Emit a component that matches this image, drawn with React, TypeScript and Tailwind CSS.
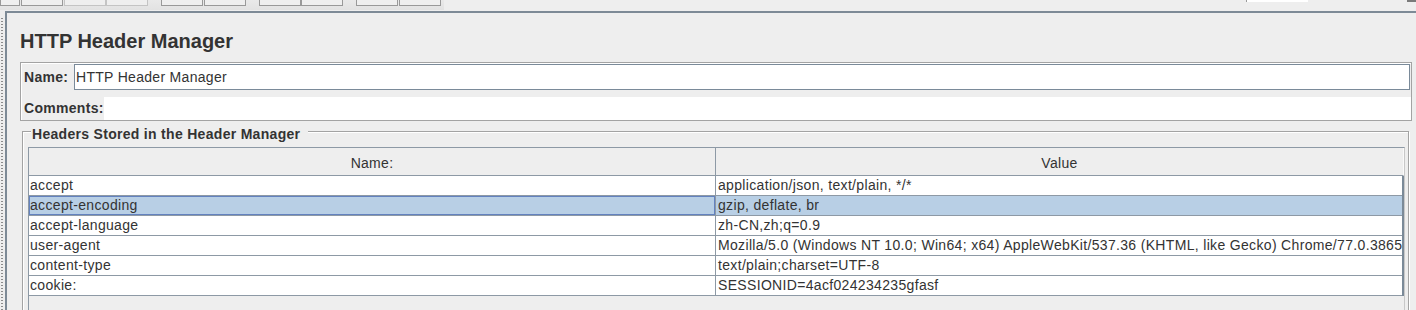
import React from "react";

const toolbarButtons = [
  { cls: "w-[20px]", dim: false },
  { cls: "ml-[1px] w-[42px]", dim: false },
  { cls: "ml-[1px] w-[42px]", dim: true },
  { cls: "w-[42px]", dim: true },
  { cls: "ml-[13px] w-[42px]", dim: false },
  { cls: "ml-[1px] w-[42px]", dim: false },
  { cls: "ml-[13px] w-[42px]", dim: false },
  { cls: "w-[42px]", dim: false },
  { cls: "ml-[13px] w-[42px]", dim: false },
  { cls: "ml-[1px] w-[42px]", dim: false },
];

const headers = [
  { name: "accept", value: "application/json, text/plain, */*" },
  { name: "accept-encoding", value: "gzip, deflate, br" },
  { name: "accept-language", value: "zh-CN,zh;q=0.9" },
  {
    name: "user-agent",
    value:
      "Mozilla/5.0 (Windows NT 10.0; Win64; x64) AppleWebKit/537.36 (KHTML, like Gecko) Chrome/77.0.3865",
  },
  { name: "content-type", value: "text/plain;charset=UTF-8" },
  { name: "cookie:", value: "SESSIONID=4acf024234235gfasf" },
];

const selectedRow = 1;

export default function App() {
  return (
    <div className="w-[1416px] h-[310px] overflow-hidden flex flex-col bg-[#eeeeee] text-[#333333] font-['Liberation_Sans',Arial,sans-serif]">
      {/* toolbar strip (cut off at the top) */}
      <div className="h-[11px] shrink-0 flex items-start">
        <div className="w-[444px] h-[10px] flex items-start bg-[linear-gradient(to_bottom,#e9e9e9,#e2e2e2)]">
          {toolbarButtons.map((b, i) => (
            <div
              key={i}
              className={`${b.cls} h-[6px] border-x border-b bg-[#efefef] ${
                b.dim ? "border-[#c4c4c4]" : "border-[#999999]"
              }`}
            />
          ))}
        </div>
        <div className="ml-[802px] w-[62px] h-[2px] bg-white border-l border-[#9a9a9a]" />
        <div className="ml-[99px] w-[9px] h-[2px] bg-[#7a7a7a]" />
      </div>

      <div className="flex flex-1 min-h-0">
        {/* split pane divider dots */}
        <div className="w-[5px] shrink-0 pt-[7px]">
          <div className="ml-[1px] w-[2px] h-full bg-[repeating-linear-gradient(to_bottom,#8c8c8c_0px,#8c8c8c_1px,transparent_1px,transparent_3px)]" />
        </div>

        <div className="flex-1 flex flex-col border-l-2 border-t-2 border-[#7d8a96]">
          <h1 className="ml-[13px] mt-[17px] h-[23px] text-[20px] leading-[23px] font-bold">
            HTTP Header Manager
          </h1>

          {/* name / comments */}
          <div className="ml-[13px] mt-[9px] w-[1392px] h-[59px] shrink-0 border border-[#a3a3a3] shadow-[inset_1px_1px_0_#ffffff] pt-[1px] pl-[3px] flex flex-col text-[14px] tracking-[0.3px]">
            <div className="h-[26px] flex items-center">
              <span className="w-[50px] font-bold">Name:</span>
              <div className="flex-1 h-full mr-[1px] bg-white border border-[#7a8a99] pl-[1px] flex items-center">
                HTTP Header Manager
              </div>
            </div>
            <div className="mt-[7px] h-[23px] flex items-center">
              <span className="w-[80px] font-bold">Comments:</span>
              <div className="flex-1 h-full bg-white" />
            </div>
          </div>

          {/* headers table */}
          <div className="ml-[15px] mt-[10px] w-[1387px] h-[220px] shrink-0 border border-[#a3a3a3] shadow-[inset_1px_1px_0_#ffffff,1px_1px_0_#ffffff] flex flex-col text-[14px] tracking-[0.3px]">
            <div className="ml-[8px] -mt-[6px] h-[16px] w-fit pl-[1px] pr-[8px] bg-[#eeeeee] leading-[16px] font-bold">
              Headers Stored in the Header Manager
            </div>

            <div className="ml-[5px] mt-[5px] w-[1377px] h-[200px] border-l border-t border-[#8d99a5] border-r-[#c8c8c8] border-r">
              <div className="h-[28px] flex border-b border-[#8d99a5] border-r border-r-[#fafafa]">
                <div className="w-[687px] shrink-0 border-r border-[#8d99a5] pt-[4px] flex items-center justify-center">
                  Name:
                </div>
                <div className="flex-1 pt-[4px] flex items-center justify-center">
                  Value
                </div>
              </div>

              <div className="w-[1375px] border-r-2 border-[#7b8a98] tracking-[0.33px]">
                {headers.map((h, i) => (
                  <div
                    key={h.name}
                    className={`h-[20px] flex border-b border-[#8d99a5] leading-[19px] ${
                      i === selectedRow ? "bg-[#b8cfe5]" : "bg-white"
                    }`}
                  >
                    <div className="w-[687px] shrink-0 border-r border-[#8d99a5]">
                      <div
                        className={`h-full pl-[1px] whitespace-nowrap overflow-hidden ${
                          i === selectedRow ? "shadow-[inset_0_0_0_1px_#6382bf]" : ""
                        }`}
                      >
                        {h.name}
                      </div>
                    </div>
                    <div className="flex-1 min-w-0 pl-[2px] whitespace-nowrap overflow-hidden">
                      {h.value}
                    </div>
                  </div>
                ))}
              </div>
            </div>
          </div>
        </div>
      </div>
    </div>
  );
}
